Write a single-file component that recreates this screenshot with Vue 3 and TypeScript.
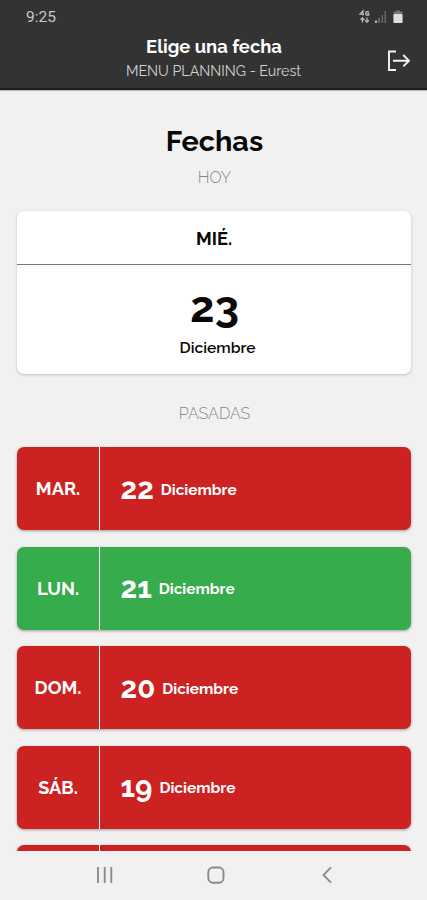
<script setup lang="ts">
interface PastDay {
  weekday: string
  number: string
  month: string
  status: 'missed' | 'done'
}

const today = { weekday: 'MIÉ.', number: '23', month: 'Diciembre' }

const pastDays: PastDay[] = [
  { weekday: 'MAR.', number: '22', month: 'Diciembre', status: 'missed' },
  { weekday: 'LUN.', number: '21', month: 'Diciembre', status: 'done' },
  { weekday: 'DOM.', number: '20', month: 'Diciembre', status: 'missed' },
  { weekday: 'SÁB.', number: '19', month: 'Diciembre', status: 'missed' },
  { weekday: '', number: '', month: '', status: 'missed' },
]
</script>

<template>
  <div class="screen">
    <header class="header">
      <div class="status">
        <span class="clock">9:25</span>
        <svg class="status-icons" width="48" height="16" viewBox="0 0 48 16">
          <g fill="none" stroke="#b9b9b9" stroke-width="1.300">
            <path d="M4 6.500V2L1 5.200h4M10 2.700H7.300L6.600 4.300L7.300 6H9.700V4.400H8.300" />
            <path d="M3.500 13.500V9M1.500 10.700L3.500 8.800L5.300 10.700M8 8.500v4.500M6 11.200L8 13.200L10 11.200" />
          </g>
          <path d="M16 11.500h2v2.500h-2z" fill="#b9b9b9" />
          <path d="M19 9h2v5h-2zM22.500 6h1.500v8h-1.500zM25.500 2h1.500v12h-1.500z" fill="#666" />
          <path d="M37 1.500h4v2h-4z" fill="#777" />
          <rect x="34.500" y="2.500" width="9" height="11.500" rx="1" fill="#777" />
          <rect x="34.500" y="5" width="9" height="9" rx="1" fill="#dedede" />
        </svg>
      </div>
      <div class="bar">
        <h1 class="bar-title">Elige una fecha</h1>
        <p class="bar-subtitle">MENU PLANNING - Eurest</p>
        <svg class="exit" width="24" height="22" viewBox="0 0 24 22" fill="none" stroke="#f4f4f4" stroke-width="1.900">
          <path d="M9 1.500H2V20H9M6 10.700H22M16.300 5L22 10.700L16.300 16.400" />
        </svg>
      </div>
    </header>

    <main class="content">
      <h2 class="heading">Fechas</h2>
      <p class="section hoy">HOY</p>
      <section class="today">
        <div class="today-weekday">{{ today.weekday }}</div>
        <div class="today-date">
          <div class="number">{{ today.number }}</div>
          <div class="month">{{ today.month }}</div>
        </div>
      </section>

      <p class="section past">PASADAS</p>
      <ul class="list">
        <li v-for="(day, i) in pastDays" :key="i" class="row" :class="day.status">
          <div class="weekday">{{ day.weekday }}</div>
          <div class="date">
            <span class="number">{{ day.number }}</span>
            <span class="month">{{ day.month }}</span>
          </div>
        </li>
      </ul>
    </main>

    <nav class="nav">
      <svg width="18" height="18" viewBox="0 0 18 18" stroke="#8b8b8b" stroke-width="1.900">
        <path d="M2 1v16M8.700 1v16M15.300 1v16" />
      </svg>
      <svg width="18" height="18" viewBox="0 0 18 18" fill="none" stroke="#8b8b8b" stroke-width="1.900">
        <rect x="1.300" y="1.500" width="15.200" height="15.200" rx="4.700" />
      </svg>
      <svg width="18" height="18" viewBox="0 0 18 18" fill="none" stroke="#8b8b8b" stroke-width="1.900">
        <path d="M13 1.300L5.500 9L13 16.700" />
      </svg>
    </nav>
  </div>
</template>

<style>
body {
  margin: 0;
  background: #f1f1f1;
}
</style>

<style scoped>
.screen {
  display: flex;
  flex-direction: column;
  height: 900px;
  overflow: hidden;
  background: #f1f1f1;
  color: #080808;
  font-family: Raleway, Lato, "Open Sans", sans-serif;
}
h1, h2, p, ul {
  margin: 0;
  padding: 0;
}
.header {
  box-sizing: border-box;
  flex: none;
  height: 90px;
  background: #333;
  border-bottom: 2px solid #1f1f1f;
  box-shadow: 0 1px 1px #bbb;
}
.status {
  display: flex;
  justify-content: space-between;
  height: 34px;
  padding: 0 20px 0 26px;
}
.clock {
  font: 15.500px/35px Roboto, sans-serif;
  color: #c9c9c9;
}
.status-icons {
  margin-top: 9px;
}
.bar {
  position: relative;
  text-align: center;
}
.bar-title {
  padding: 1px 0 0 1px;
  font-size: 18.400px;
  line-height: 24px;
  font-weight: 700;
  color: #fff;
}
.bar-subtitle {
  margin-top: 1px;
  font-size: 14.250px;
  line-height: 22px;
  color: #d0d0d0;
}
.exit {
  position: absolute;
  right: 16px;
  top: 16px;
}
.content {
  flex: none;
  box-sizing: border-box;
  height: 761px;
  padding: 31px 16px 0 17px;
  overflow: hidden;
}
.heading {
  padding-left: 1px;
  font-size: 28.800px;
  line-height: 40px;
  font-weight: 700;
  text-align: center;
}
.section {
  padding-left: 1px;
  text-align: center;
  font-size: 16px;
  line-height: 20px;
  font-weight: 300;
  color: #888;
}
.hoy {
  margin-top: 7px;
}
.today {
  margin-top: 23px;
  height: 163px;
  border-radius: 7px;
  background: #fff;
  box-shadow: 0 1px 3px rgba(0, 0, 0, 0.220);
}
.today-weekday {
  height: 53px;
  border-bottom: 1px solid #777;
  text-align: center;
  font-size: 18.200px;
  line-height: 55px;
  font-weight: 700;
}
.today-date {
  display: flex;
  flex-direction: column;
  align-items: center;
}
.number {
  font-weight: 700;
  font-size: 29.500px;
  line-height: 32px;
}
.today .number {
  margin: 20px 0 0 1px;
  font-size: 43.500px;
  line-height: 44px;
}
.month {
  font-size: 15.400px;
  line-height: 20px;
  font-weight: 700;
}
.row .month {
  padding-top: 2px;
}
.today .month {
  margin: 9px 0 0 7px;
  font-size: 15.600px;
  font-weight: 600;
}
.past {
  margin-top: 30px;
}
.list {
  display: flex;
  flex-direction: column;
  gap: 16.500px;
  margin-top: 23px;
  list-style: none;
}
.row {
  display: flex;
  flex: none;
  height: 83px;
  border-radius: 7px;
  color: #fff;
  background: #cc2222;
  box-shadow: 0 1px 3px rgba(0, 0, 0, 0.350);
}
.row.done {
  background: #36ac4d;
}
.weekday {
  box-sizing: border-box;
  flex: none;
  width: 83px;
  border-right: 1px solid #fff;
  text-align: center;
  font-size: 18.300px;
  line-height: 84px;
  font-weight: 700;
}
.date {
  display: flex;
  align-items: center;
  gap: 7px;
  padding-left: 20.500px;
}
.nav {
  flex: 1;
  display: flex;
  justify-content: space-between;
  align-items: center;
  padding: 0 91px 2px 95.500px;
}
</style>
